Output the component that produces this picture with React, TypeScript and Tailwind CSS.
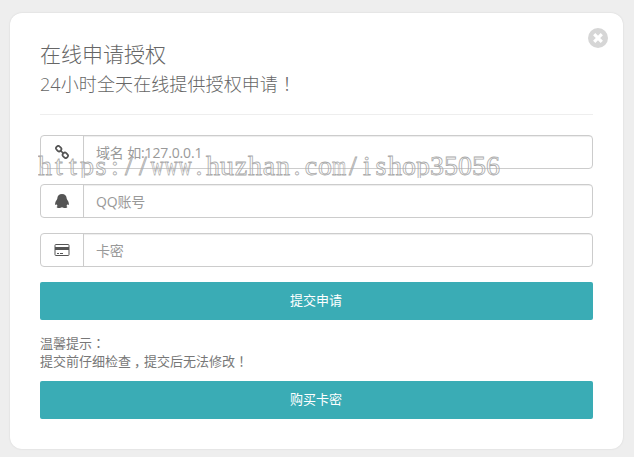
import type { ReactNode } from "react"

const watermark = "https://www.huzhan.com/ishop35056"

function LinkIcon() {
  return (
    <svg width="14" height="14" viewBox="0 0 14 14" fill="none" stroke="currentColor" strokeWidth="1.7">
      <rect x="-2.8" y="-2.2" width="5.6" height="4.4" rx="2" transform="translate(3.7 3.7) rotate(45)" />
      <rect x="-2.8" y="-2.2" width="5.6" height="4.4" rx="2" transform="translate(10.3 10.3) rotate(45)" />
      <path d="M5 5l4 4" />
    </svg>
  )
}

function QqIcon() {
  return (
    <svg width="14" height="14" viewBox="0 0 14 14" fill="currentColor">
      <path d="M7 0C4.2 0 2.3 1.9 2.3 4.4c0 .5-.5.8-.5 1.4C.8 7 .1 8.7.1 10.1c0 1 .5 1.2 1.5.2.2.7.6 1.2 1.1 1.6-.7.3-1 .7-1 1.1 0 1.2 3.9 1.3 5.3.2 1.4 1.1 5.3 1 5.3-.2 0-.4-.3-.8-1-1.1.5-.4.9-.9 1.1-1.6 1 1 1.5.8 1.5-.2 0-1.4-.7-3.1-1.7-4.3 0-.6-.5-.9-.5-1.4C11.7 1.9 9.8 0 7 0z" />
    </svg>
  )
}

function CardIcon() {
  return (
    <svg width="16" height="14" viewBox="0 0 16 14" fill="none">
      <rect x="1" y="1.5" width="14" height="11" rx="0.8" stroke="currentColor" />
      <path d="M1 4h14v3H1zM3 10h2v1H3zM6 10h3v1H6z" fill="currentColor" />
    </svg>
  )
}

// full-width punctuation sits in the middle of its cell
function Punct({ children }: { children: string }) {
  return <span className="font-['Noto_Sans_CJK_TC',sans-serif] leading-none">{children}</span>
}

function Field({ icon, placeholder }: { icon: ReactNode; placeholder: string }) {
  return (
    <div className="mb-[15px] flex h-[34px] overflow-hidden rounded-[4px] border border-[#ccc]">
      <span className="flex w-[43px] shrink-0 items-center justify-center border-r border-[#ccc] text-[#555]">
        {icon}
      </span>
      <input
        className="min-w-0 flex-1 px-3 text-[14px] tracking-[-0.15px] shadow-[inset_0_1px_1px_rgba(0,0,0,0.075)] outline-none placeholder:text-[#999]"
        placeholder={placeholder}
      />
    </div>
  )
}

function SubmitButton({ children }: { children: ReactNode }) {
  return (
    <button className="block h-[38px] w-full rounded-[2px] bg-[#3aacb5] pr-px text-[13px] text-white">
      {children}
    </button>
  )
}

export default function App() {
  return (
    <div className="h-[457px] bg-[#eee] px-[10px] pt-[13px] font-['Open_Sans','Noto_Sans_CJK_SC',sans-serif] text-[#777]">
      <div className="relative h-[436px] w-[613px] rounded-[12px] bg-white px-[30px] pt-[26px] shadow-[0_0_2px_rgba(0,0,0,0.12)]">
        <button className="absolute top-[15px] right-[15px] flex h-5 w-5 items-center justify-center rounded-full bg-[#d6d6d6] text-white">
          <svg width="10" height="10" viewBox="0 0 10 10" stroke="currentColor" strokeWidth="3.2">
            <path d="M1.2 1.2l7.6 7.6M8.8 1.2l-7.6 7.6" />
          </svg>
        </button>
        <h1 className="h-[30px] text-[21px] leading-[30px] font-light text-[#666]">在线申请授权</h1>
        <h2 className="h-[30px] text-[18px] leading-[30px] font-light tracking-[0.1px] text-[#666]">
          24小时全天在线提供授权申请<Punct>！</Punct>
        </h2>
        <hr className="mt-[15px] mb-5 border-[#eee]" />
        <Field icon={<LinkIcon />} placeholder="域名 如:127.0.0.1" />
        <Field icon={<QqIcon />} placeholder="QQ账号" />
        <Field icon={<CardIcon />} placeholder="卡密" />
        <SubmitButton>提交申请</SubmitButton>
        <p className="mt-[14px] mb-[11px] h-[36px] text-[13px] leading-[18px]">
          温馨提示<Punct>：</Punct>
          <br />
          提交前仔细检查<span className="relative left-[3px]">，</span>提交后无法修改<Punct>！</Punct>
        </p>
        <SubmitButton>购买卡密</SubmitButton>
        <div className="pointer-events-none absolute top-[137px] left-[28px] flex font-['Liberation_Serif',serif] text-[28px] leading-[32px] text-transparent [-webkit-text-stroke:0.8px_#aaa] [clip-path:inset(0_0_4px_0)]">
          {watermark.split("").map((char, i) => (
            <span
              key={i}
              className={
                char === "w" || char === "m"
                  ? "flex w-[14px] scale-x-[0.65] justify-center"
                  : "flex w-[14px] justify-center"
              }
            >
              {char}
            </span>
          ))}
        </div>
      </div>
    </div>
  )
}
